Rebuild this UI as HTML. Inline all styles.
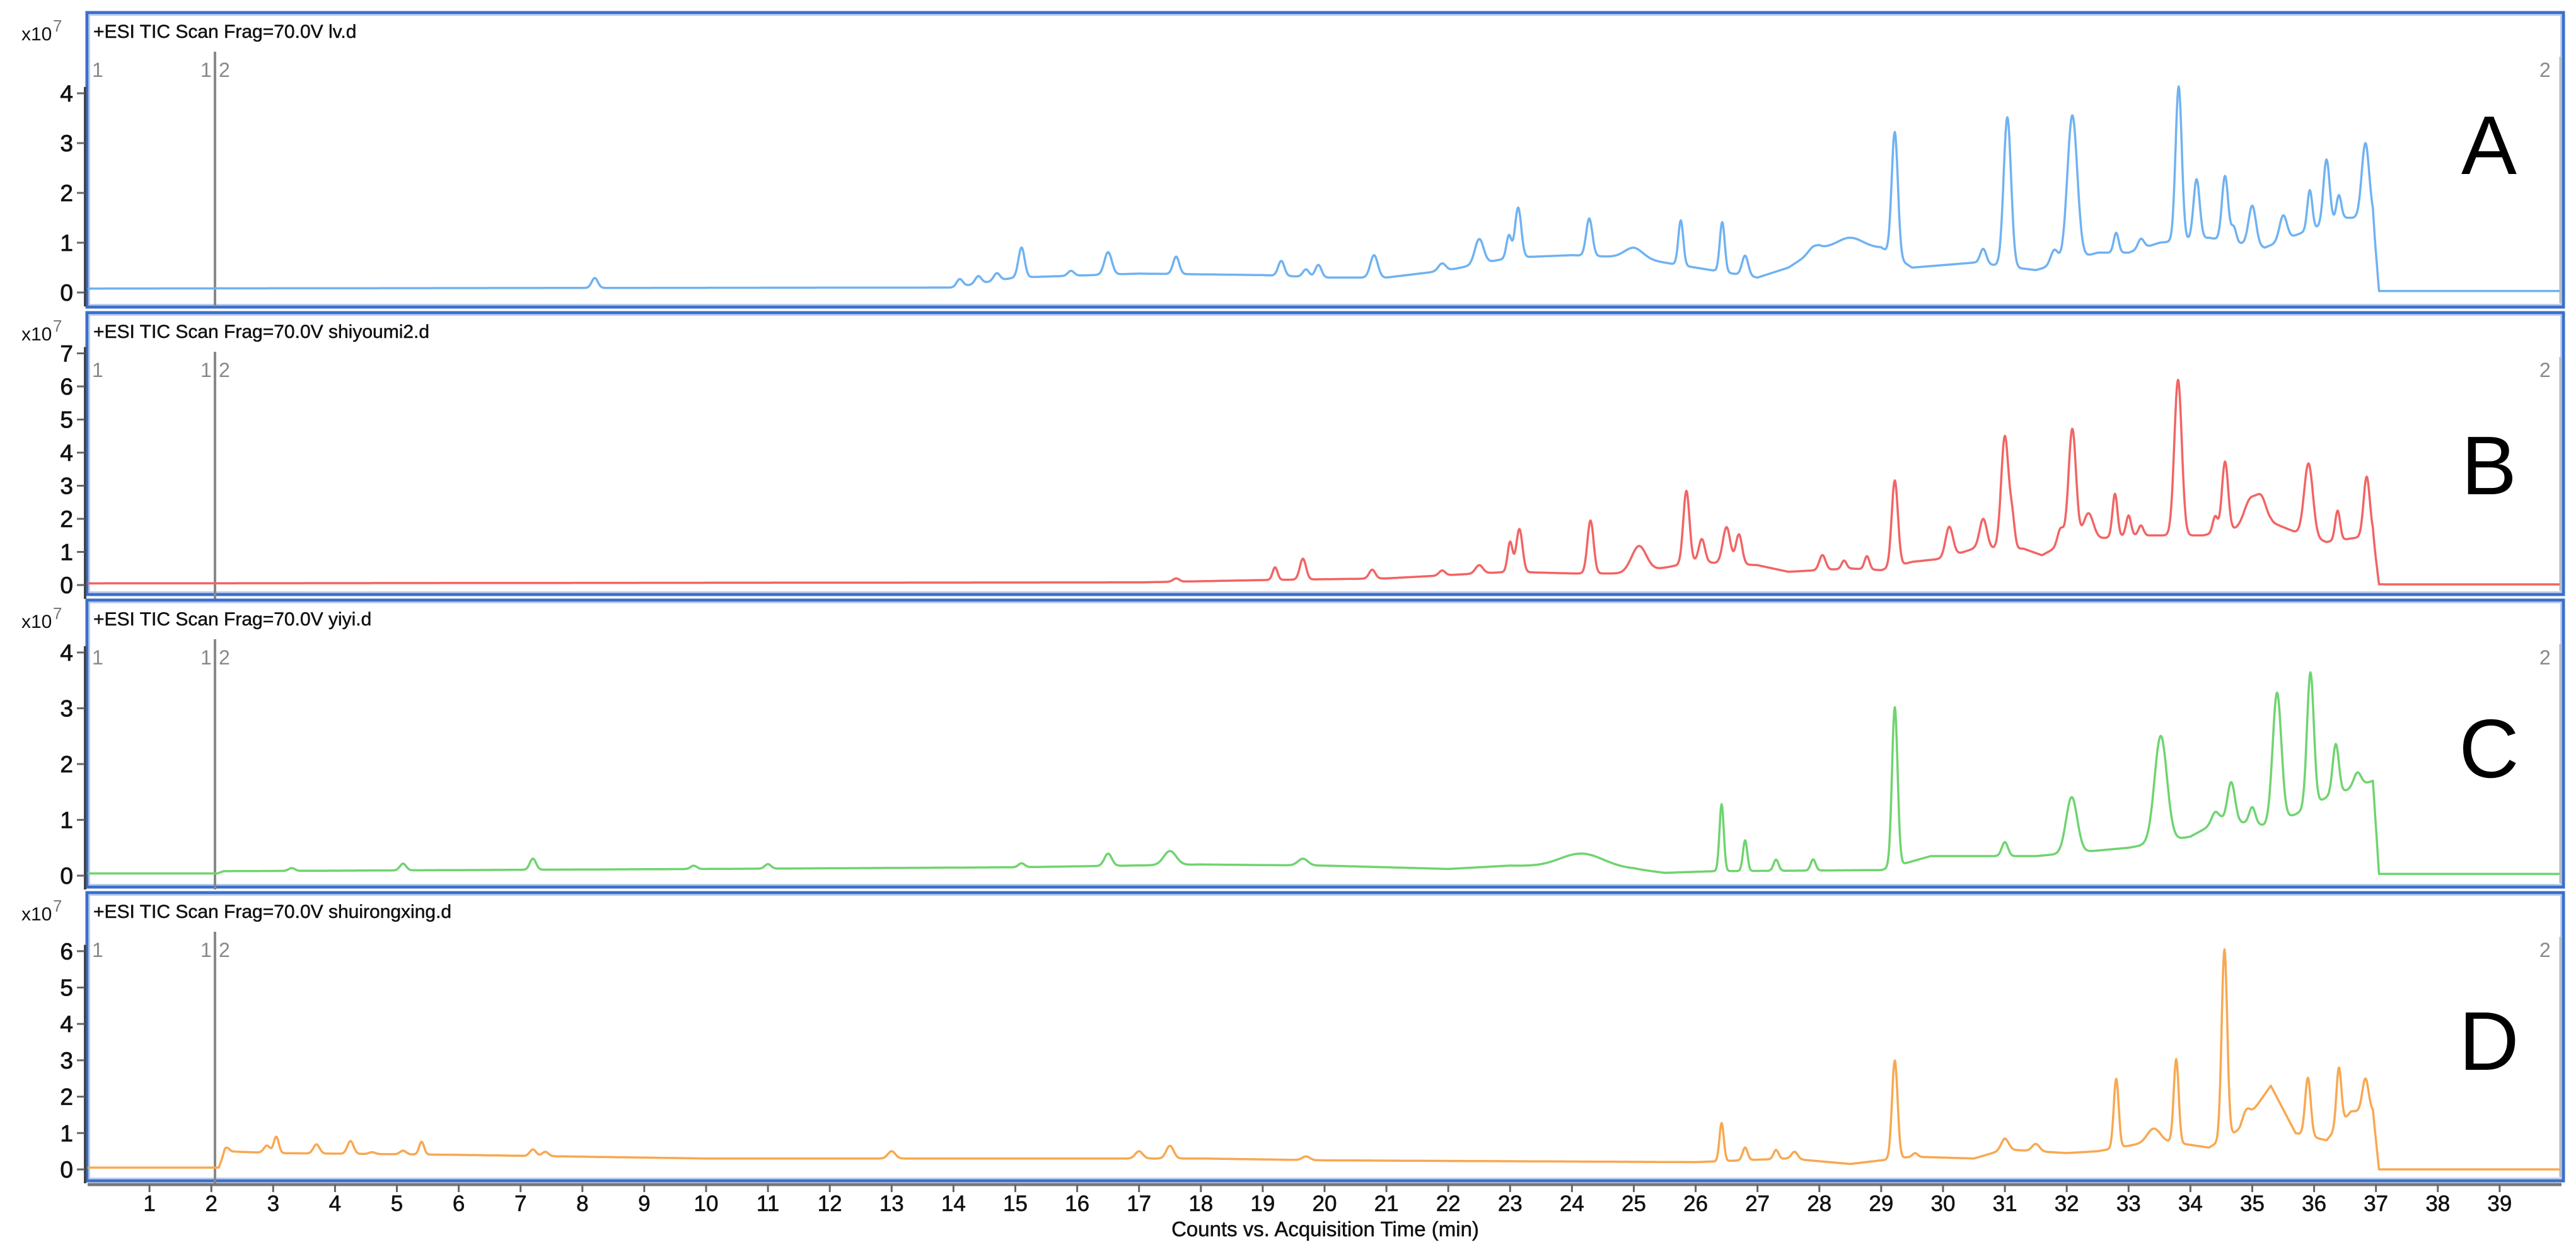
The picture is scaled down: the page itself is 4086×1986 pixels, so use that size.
<!DOCTYPE html>
<html><head><meta charset="utf-8">
<style>
html,body{margin:0;padding:0;background:#fff;}
body{width:4086px;height:1986px;overflow:hidden;position:relative;font-family:"Liberation Sans",Arial,sans-serif;}
svg{position:absolute;left:0;top:0;}
</style></head>
<body>
<svg id="s" width="4086" height="1986" viewBox="0 0 4086 1986" xmlns="http://www.w3.org/2000/svg" font-family="Liberation Sans, Arial, sans-serif">
</svg>
<script>
(function(){
var NS="http://www.w3.org/2000/svg",S=document.getElementById('s');
function el(n,a,t){var e=document.createElementNS(NS,n);for(var k in a)e.setAttribute(k,a[k]);if(t!==undefined)e.textContent=t;S.appendChild(e);return e;}
function X(t){return 139+98.1*t;}
var panels=[
{top:20,bot:487,zero:464,unit:79,n:4,name:"lv.d",letter:"A",ly:229,color:"#6fb2f2",
 base:[[0,.08],[14,.1],[15,.3],[17,.38],[19,.35],[20,.3],[21,.3],[22,.45],[23,.7],[24,.75],[25,.7],[26,.5],[27,.3],[27.5,.5],[28,.9],[29,.9],[29.5,.5],[30,.55],[30.5,.6],[31.5,.45],[32.5,.8],[33,.8],[33.5,1],[34.3,1.1],[35.2,.9],[35.8,1.2],[36.5,1.5],[36.95,1.5],[37.05,.03],[40,.03]],
 pk:[[8.2,.2,.05],[14.1,.15,.05],[14.4,.15,.05],[14.7,.15,.05],[15.1,.6,.05],[15.9,.1,.05],[16.5,.45,.06],[17.6,.35,.05],[19.3,.3,.05],[19.7,.15,.05],[19.9,.25,.05],[20.8,.45,.06],[21.9,.15,.06],[22.5,.5,.07],[22.98,.45,.04],[23.13,1.0,.05],[24.28,.75,.05],[25.0,.2,.15],[25.76,.9,.04],[26.43,1.0,.04],[26.8,.4,.05],[27.9,.1,.08],[28.5,.2,.2],[29.22,2.5,.05],[30.65,.3,.05],[31.04,3.0,.06],[32.09,2.9,.08],[31.8,.3,.06],[32.8,.4,.04],[33.2,.2,.05],[33.81,3.1,.05],[34.1,1.2,.05],[34.56,1.3,.05],[34.7,.3,.04],[35.0,.8,.06],[35.5,.5,.06],[35.93,.8,.04],[36.2,1.3,.05],[36.4,.5,.04],[36.83,1.5,.06]]},
{top:496,bot:943,zero:928,unit:52.5,n:7,name:"shiyoumi2.d",letter:"B",ly:737,color:"#f26464",
 base:[[0,.05],[17,.08],[19,.15],[21,.2],[22,.3],[23,.4],[24,.35],[25,.35],[26,.7],[27,.6],[27.5,.4],[28.5,.5],[29,.45],[29.5,.7],[30,.8],[30.5,1.1],[31.3,1.1],[31.6,.9],[32,1.3],[33,1.5],[33.5,1.5],[34.2,1.5],[35.3,1.9],[35.7,1.6],[36.2,1.3],[36.95,1.5],[37.05,.02],[40,.02]],
 pk:[[17.6,.1,.05],[19.2,.38,.04],[19.65,.63,.05],[20.77,.27,.05],[21.9,.15,.05],[22.5,.25,.06],[23.0,.9,.04],[23.15,1.3,.05],[24.3,1.6,.05],[25.08,.8,.12],[25.85,2.2,.05],[26.1,.7,.05],[26.5,1.1,.06],[26.7,.9,.05],[28.05,.45,.05],[28.4,.25,.04],[28.77,.4,.04],[29.22,2.6,.05],[30.1,.9,.06],[30.65,.9,.06],[31.0,3.4,.06],[31.12,.8,.04],[31.9,.5,.05],[32.09,3.4,.06],[32.35,.8,.08],[32.78,1.3,.04],[33.0,.6,.04],[33.2,.3,.04],[33.8,4.7,.06],[34.4,.5,.04],[34.56,2.1,.05],[34.97,.8,.1],[35.15,.7,.08],[35.91,2.2,.07],[36.38,.9,.04],[36.85,1.8,.05]]},
{top:952,bot:1407,zero:1389,unit:88.5,n:4,name:"yiyi.d",letter:"C",ly:1186,color:"#6fd46f",
 base:[[0,.04],[2.1,.04],[2.2,.08],[10,.12],[15,.15],[18,.2],[20,.18],[22,.12],[23,.18],[25,.12],[25.5,.05],[26.3,.08],[29,.1],[29.8,.35],[30.5,.35],[31.5,.35],[32.5,.45],[33,.5],[34,.7],[34.5,1.0],[35.2,.9],[35.7,1.1],[36.2,1.4],[36.95,1.7],[37.05,.03],[40,.03]],
 pk:[[3.3,.05,.05],[5.1,.12,.05],[7.2,.2,.05],[9.8,.06,.05],[11.0,.08,.05],[15.1,.07,.05],[16.5,.22,.06],[17.5,.25,.1],[19.65,.12,.08],[24.16,.25,.35],[26.42,1.2,.035],[26.8,.55,.035],[27.3,.2,.04],[27.9,.2,.04],[29.22,2.85,.045],[31.0,.25,.05],[32.08,1.0,.09],[33.52,1.9,.1],[34.4,.2,.06],[34.66,.7,.06],[35.0,.3,.05],[35.4,2.3,.07],[35.94,2.4,.055],[36.35,.9,.05],[36.7,.25,.06]]},
{top:1416,bot:1873,zero:1855,unit:57.7,n:6,name:"shuirongxing.d",letter:"D",ly:1650,color:"#f8a850",
 base:[[0,.05],[2.12,.05],[2.22,.5],[3,.45],[6,.4],[10,.3],[15,.3],[18,.3],[20,.25],[26,.2],[27.5,.3],[28.5,.15],[29.5,.35],[30.5,.3],[31,.55],[32,.45],[32.5,.5],[33.5,.8],[34.3,.6],[34.8,1.1],[35.3,2.3],[35.7,1.0],[36.2,.8],[36.6,1.6],[36.95,1.6],[37.05,0],[40,0]],
 pk:[[2.25,.1,.04],[2.9,.2,.05],[3.05,.45,.04],[3.7,.25,.05],[4.25,.35,.05],[4.6,.05,.05],[5.1,.1,.05],[5.4,.35,.04],[7.2,.18,.05],[7.4,.12,.05],[13.0,.2,.06],[17.0,.2,.06],[17.5,.35,.06],[19.7,.1,.06],[26.42,1.05,.035],[26.8,.35,.04],[27.3,.25,.04],[27.6,.2,.05],[29.22,2.7,.045],[29.55,.1,.04],[31.0,.3,.06],[31.5,.2,.06],[32.8,1.9,.04],[33.4,.35,.1],[33.77,2.3,.04],[34.55,5.2,.045],[34.9,.3,.06],[35.9,1.6,.045],[36.4,1.6,.04],[36.83,.9,.05]]}
];
function baseAt(b,t){for(var i=1;i<b.length;i++){if(t<=b[i][0]){var a=b[i-1],c=b[i];return a[1]+(c[1]-a[1])*(t-a[0])/(c[0]-a[0]);}}return b[b.length-1][1];}
panels.forEach(function(p){
  el('rect',{x:138,y:p.top,width:3928,height:p.bot-p.top,fill:'none',stroke:'#3b6fcb','stroke-width':5});
  el('rect',{x:142,y:p.top+4,width:3920,height:p.bot-p.top-8,fill:'none',stroke:'#b9cdee','stroke-width':2});
  var ytop=p.zero-p.n*p.unit;
  el('line',{x1:135,y1:ytop-10,x2:135,y2:p.zero+22,stroke:'#444','stroke-width':4});
  for(var k=0;k<=p.n;k++){var y=p.zero-k*p.unit;
    el('line',{x1:122,y1:y,x2:134,y2:y,stroke:'#666','stroke-width':3});
    el('text',{x:116,y:y+13,'font-size':37,'text-anchor':'end',fill:'#111',stroke:'#111','stroke-width':0.8},String(k));}
  el('text',{x:34,y:p.top+44,'font-size':30,fill:'#111'},'x10');
  el('text',{x:84,y:p.top+30,'font-size':26,fill:'#777'},'7');
  el('text',{x:148,y:p.top+40,'font-size':30,fill:'#111',stroke:'#111','stroke-width':0.5},'+ESI TIC Scan Frag=70.0V '+p.name);
  el('line',{x1:341,y1:p.top+62,x2:341,y2:p.zero+22,stroke:'#888','stroke-width':4});
  el('text',{x:146,y:p.top+102,'font-size':32,fill:'#888'},'1');
  el('text',{x:318,y:p.top+102,'font-size':32,fill:'#888'},'1');
  el('text',{x:347,y:p.top+102,'font-size':32,fill:'#888'},'2');
  el('text',{x:4028,y:p.top+102,'font-size':32,fill:'#888'},'2');
  el('line',{x1:4061,y1:p.top+70,x2:4061,y2:p.bot-6,stroke:'#bbb','stroke-width':3});
  el('text',{x:3948,y:p.ly+47,'font-size':132,'text-anchor':'middle',fill:'#000'},p.letter);
  var d='';
  for(var t=0;t<=40.001;t+=0.01){
    var v=baseAt(p.base,t);
    for(var j=0;j<p.pk.length;j++){var q=p.pk[j],z=(t-q[0])/q[2];if(z*z<30)v+=q[1]*Math.exp(-0.5*z*z);}
    var px=X(t);if(px>4060)px=4060;
    d+=(t===0?'M':'L')+px.toFixed(1)+' '+(p.zero-v*p.unit).toFixed(1);
  }
  el('path',{d:d,fill:'none',stroke:p.color,'stroke-width':3.5,'stroke-linejoin':'round'});
});
el('line',{x1:139,y1:1879,x2:4063,y2:1879,stroke:'#777','stroke-width':5});
for(var m=1;m<=39;m++){var x=X(m);
  el('line',{x1:x,y1:1879,x2:x,y2:1891,stroke:'#666','stroke-width':3});
  el('text',{x:x,y:1921,'font-size':35,'text-anchor':'middle',fill:'#111',stroke:'#111','stroke-width':0.6},String(m));}
el('text',{x:2102,y:1961,'font-size':33,'text-anchor':'middle',fill:'#111',stroke:'#111','stroke-width':0.5},'Counts vs. Acquisition Time (min)');
})();
</script>
</body></html>
